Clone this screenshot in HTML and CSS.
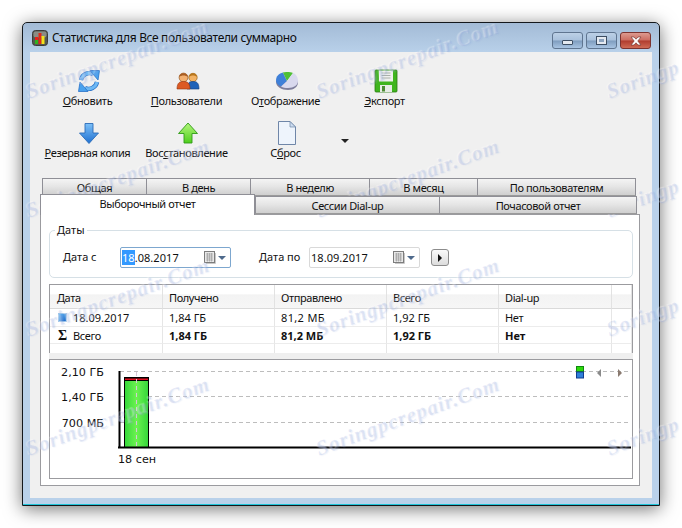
FILE: index.html
```html
<!DOCTYPE html>
<html lang="ru">
<head>
<meta charset="utf-8">
<title>Статистика</title>
<link rel="stylesheet" href="styles.css">
</head>
<body>
<div class="window">
  <header class="titlebar">
    <svg class="app-icon" width="16" height="16" viewBox="0 0 16 16"><rect x="0.5" y="0.5" width="15" height="15" rx="3" fill="#55584f" stroke="#3c3c3c"/><rect x="1.5" y="1.5" width="13" height="6" rx="2" fill="#8a8c85"/><rect x="3" y="7" width="3" height="7" fill="#e8201a"/><rect x="6.5" y="3" width="3" height="11" fill="#e02a1a"/><rect x="9.5" y="6" width="3" height="8" fill="#f2e21c"/><rect x="3" y="10" width="3" height="4" fill="#30b020"/></svg>
    <span class="title">Статистика для Все пользователи суммарно</span>
    <div class="caption">
      <div class="cap cap-min"><i class="glyph-min"></i></div>
      <div class="cap cap-max"><i class="glyph-max"></i></div>
      <div class="cap cap-close"><svg width="14" height="10" viewBox="0 0 14 10"><path d="M2 1 L5 1 L7 3.2 L9 1 L12 1 L8.8 5 L12 9 L9 9 L7 6.8 L5 9 L2 9 L5.2 5 Z" fill="#fff" stroke="#7a3a34" stroke-width="0.7"/></svg></div>
    </div>
  </header>

  <main class="client">
    <div class="toolbar">
      <div class="tool">
        <svg class="icon" width="24" height="24" viewBox="0 0 24 24"><g fill="none"><path d="M4 11 A8.5 8.5 0 0 1 16 5" stroke="#2a72c8" stroke-width="4.4"/><path d="M20 13 A8.5 8.5 0 0 1 8 19" stroke="#2a72c8" stroke-width="4.4"/><path d="M4 11 A8.5 8.5 0 0 1 16 5" stroke="#6db8f4" stroke-width="3"/><path d="M20 13 A8.5 8.5 0 0 1 8 19" stroke="#6db8f4" stroke-width="3"/></g><path d="M13 1.5 L22.5 1.5 L21 11 Z" fill="#4aa2ee" stroke="#2a72c8" stroke-width="0.8"/><path d="M11 22.5 L1.5 22.5 L3 13 Z" fill="#4aa2ee" stroke="#2a72c8" stroke-width="0.8"/></svg>
        <span><u>О</u>бновить</span>
      </div>
      <div class="tool">
        <svg class="icon" width="24" height="24" viewBox="0 0 24 24"><circle cx="17" cy="8.5" r="4.2" fill="#f2b264" stroke="#96651f" stroke-width="0.7"/><path d="M13 8 C13 3 21 3 21 8 C19 6 15 6 13 8 Z" fill="#b8761c"/><path d="M11 20 C11 13 14 12.5 17 12.5 C20 12.5 23 13 23 20 Z" fill="#1f62b8" stroke="#123f80" stroke-width="0.6"/><circle cx="7.5" cy="8.5" r="4.4" fill="#f3b070" stroke="#8f5424" stroke-width="0.7"/><path d="M3.2 8 C3 3 12 3 11.8 8 C10 6 5 6 3.2 8 Z" fill="#a85d22"/><path d="M1 20 C1 13 4.5 12.5 7.5 12.5 C10.5 12.5 14 13 14 20 Z" fill="#dc5a24" stroke="#93350f" stroke-width="0.6"/></svg>
        <span><u>П</u>ользователи</span>
      </div>
      <div class="tool">
        <svg class="icon" width="24" height="24" viewBox="0 0 24 24"><path d="M1 12.5 C1 18 6.5 21 13 21 C19 21 23 17.5 23 13.5 L23 12 L1 12 Z" fill="#7f7f9c"/><path d="M12 12 L8 3.6 C4 4.4 1 7.5 1 11.5 C1 14 3 16.5 6 17.5 Z" fill="#3f80d8"/><path d="M12 12 L8 3.6 C10 3 15 2.8 18 4 Z" fill="#4fc034"/><path d="M12 12 L18 4 C21 5 23 8 23 12 C23 16 19 19 13 19 C10 19 8 18.5 6 17.5 Z" fill="#d9d9ee"/></svg>
        <span>О<u>т</u>ображение</span>
      </div>
      <div class="tool">
        <svg class="icon" width="24" height="24" viewBox="0 0 24 24"><path d="M2 1 H22 A1 1 0 0 1 23 2 V22 A1 1 0 0 1 22 23 H2 A1 1 0 0 1 1 22 V2 A1 1 0 0 1 2 1 Z" fill="#3fb51e" stroke="#2a7c12" stroke-width="0.8"/><rect x="5" y="1.5" width="14" height="11" fill="#eef0ee"/><path d="M7.5 4 H16.5 M7.5 6.5 H16.5 M7.5 9 H16.5" stroke="#aab0aa"/><rect x="6" y="16" width="12" height="7" fill="#e6ece6"/><rect x="8" y="17" width="3" height="5.5" fill="#4c8c34"/></svg>
        <span><u>Э</u>кспорт</span>
      </div>
      <div class="tool">
        <svg class="icon" width="24" height="24" viewBox="0 0 24 24"><defs><linearGradient id="bl" x1="0" y1="0" x2="0" y2="1"><stop offset="0" stop-color="#7cc0f8"/><stop offset="1" stop-color="#1f70d0"/></linearGradient></defs><path d="M8 2.5 H16 V12 H21.5 L12 22.5 L2.5 12 H8 Z" fill="url(#bl)" stroke="#2b6cb8" stroke-width="0.9"/></svg>
        <span><u>Р</u>езервная копия</span>
      </div>
      <div class="tool">
        <svg class="icon" width="24" height="24" viewBox="0 0 24 24"><defs><linearGradient id="gr" x1="0" y1="0" x2="0" y2="1"><stop offset="0" stop-color="#b4f67c"/><stop offset="1" stop-color="#4ece1c"/></linearGradient></defs><path d="M12 2 L21.5 12.5 H16 V22 H8 V12.5 H2.5 Z" fill="url(#gr)" stroke="#2f9a16" stroke-width="0.9"/></svg>
        <span>Вос<u>с</u>тановление</span>
      </div>
      <div class="tool">
        <svg class="icon" width="24" height="24" viewBox="0 0 24 24"><path d="M3.5 0.5 H15 L20.5 6 V23.5 H3.5 Z" fill="#eef4fc" stroke="#6f86a8"/><path d="M15 0.5 V6 H20.5 Z" fill="#cddcf0" stroke="#6f86a8" stroke-width="0.7"/></svg>
        <span>С<u>б</u>рос</span>
      </div>
      <div class="tool-more"><i class="more-arrow"></i></div>
    </div>

    <div class="tabs">
      <div class="tab-row tab-row-back">
        <div class="tab tab-w1">Общая</div>
        <div class="tab tab-w2">В день</div>
        <div class="tab tab-w3">В неделю</div>
        <div class="tab tab-w4">В месяц</div>
        <div class="tab tab-w5">По пользователям</div>
      </div>
      <div class="tab-row tab-row-front">
        <div class="tab tab-active">Выборочный отчет</div>
        <div class="tab tab-w6">Сессии Dial-up</div>
        <div class="tab tab-w7">Почасовой отчет</div>
      </div>
    </div>

    <section class="panel">
      <div class="group">
        <span class="legend">Даты</span>
        <span class="flabel flabel-a">Дата с</span>
        <div class="datefield datefield-focus">
          <span class="datetext"><mark class="sel">18</mark>.08.2017</span>
          <svg class="cal" width="12" height="13" viewBox="0 0 12 13"><rect x="0.5" y="0.5" width="10" height="11" fill="#e8e8e8" stroke="#7d7d7d"/><path d="M2 3 H9 M2 5 H9 M2 7 H9 M2 9 H9 M3.5 2 V10.5 M5.5 2 V10.5 M7.5 2 V10.5" stroke="#a5a5a5" stroke-width="0.8"/><path d="M11.5 2 V12.5 H2" fill="none" stroke="#c8c8c8"/></svg>
          <i class="drop"></i>
        </div>
        <span class="flabel flabel-b">Дата по</span>
        <div class="datefield">
          <span class="datetext">18.09.2017</span>
          <svg class="cal" width="12" height="13" viewBox="0 0 12 13"><rect x="0.5" y="0.5" width="10" height="11" fill="#e8e8e8" stroke="#7d7d7d"/><path d="M2 3 H9 M2 5 H9 M2 7 H9 M2 9 H9 M3.5 2 V10.5 M5.5 2 V10.5 M7.5 2 V10.5" stroke="#a5a5a5" stroke-width="0.8"/><path d="M11.5 2 V12.5 H2" fill="none" stroke="#c8c8c8"/></svg>
          <i class="drop"></i>
        </div>
        <div class="playbtn"><i class="play"></i></div>
      </div>

      <div class="grid">
        <div class="th th-first">Дата</div><div class="th">Получено</div><div class="th">Отправлено</div><div class="th">Всего</div><div class="th">Dial-up</div><div class="th"></div>
        <div class="td td-first"><i class="bullet"></i>18.09.2017</div><div class="td">1,84 ГБ</div><div class="td td-wide">81,2 МБ</div><div class="td">1,92 ГБ</div><div class="td td-word">Нет</div><div class="td"></div>
        <div class="td td-first td-word"><b class="sigma">Σ</b>Всего</div><div class="td td-b">1,84 ГБ</div><div class="td td-b">81,2 МБ</div><div class="td td-b">1,92 ГБ</div><div class="td td-b">Нет</div><div class="td"></div>
        <div class="tf"></div><div class="tf"></div><div class="tf"></div><div class="tf"></div><div class="tf"></div><div class="tf"></div>
      </div>

      <div class="chart">
        <svg class="plot" width="582" height="117" viewBox="0 0 582 117">
          <defs><linearGradient id="bar" x1="0" y1="0" x2="1" y2="0"><stop offset="0" stop-color="#34d83a"/><stop offset="0.5" stop-color="#6cf250"/><stop offset="1" stop-color="#34d63a"/></linearGradient></defs>
          <g class="grid-lines"><path d="M70 11.5 H581 M70 36.5 H581 M70 62.5 H581"/></g>
          <rect x="74.5" y="17.5" width="24" height="70" fill="url(#bar)" stroke="#000"/>
          <rect x="75" y="18" width="23" height="3" fill="#000"/>
          <rect x="75" y="18.5" width="23" height="1.5" fill="#e01020"/>
          <path class="bar-dash" d="M86.5 12 V87"/>
          <path d="M69.5 11 V88 M68 87.5 H581" stroke="#000" stroke-width="2" fill="none"/>
          <text class="ylab" x="54" y="16">2,10 ГБ</text>
          <text class="ylab" x="54" y="41">1,40 ГБ</text>
          <text class="ylab" x="54" y="67">700 МБ</text>
          <text class="xlab" x="68" y="103">18 сен</text>
          <rect x="526.5" y="6.5" width="7" height="5" fill="#2ed80c" stroke="#0f8a10"/>
          <rect x="526.5" y="12" width="7" height="6" fill="#2f7fd8" stroke="#103c90"/>
          <path d="M551 9 L547 13 L551 17 Z" fill="#8a8a8a"/>
          <path d="M568 9 L572 13 L568 17 Z" fill="#8a7a70"/>
        </svg>
      </div>
    </section>
  </main>
  <div class="frame-bottom"></div>
</div>

<div class="watermarks" aria-hidden="true">
  <span>Soringpcrepair.Com</span><span>Soringpcrepair.Com</span><span class="wm-short">Soringp</span>
  <span>Soringpcrepair.Com</span><span>Soringpcrepair.Com</span><span class="wm-short">Soringp</span>
  <span>Soringpcrepair.Com</span><span>Soringpcrepair.Com</span><span class="wm-short">Soringp</span>
  <span>Soringpcrepair.Com</span><span>Soringpcrepair.Com</span><span class="wm-short">Soringp</span>
</div>
</body>
</html>
```
FILE: styles.css
```css
* { box-sizing: border-box; }
html, body { margin: 0; padding: 0; }
body {
  position: relative;
  width: 682px;
  height: 528px;
  overflow: hidden;
  background: #fff;
  padding: 22px 0 0 22px;
  font: 11px/14px "Noto Sans", "Open Sans", sans-serif;
  color: #111;
}
.window {
  width: 638px;
  height: 484px;
  display: flex;
  flex-direction: column;
  border: 1px solid #14181c;
  border-radius: 5px 5px 0 0;
  background: linear-gradient(#a3bbd6, #b9d1ea 30px, #b9d1ea);
  box-shadow: 0 3px 18px rgba(0, 0, 0, .55);
}
.titlebar {
  height: 29px;
  display: flex;
  align-items: center;
  padding: 0 8px 0 9px;
  flex: none;
}
.app-icon { flex: none; }
.title {
  margin-left: 4px;
  font-size: 12px;
  letter-spacing: -.35px;
  color: #0c0c0c;
  white-space: nowrap;
}
.caption { margin-left: auto; display: flex; gap: 3px; align-self: flex-start; margin-top: 9px; }
.cap {
  width: 31px;
  height: 17px;
  border: 1px solid #5f7590;
  border-radius: 3px;
  display: flex;
  align-items: center;
  justify-content: center;
  background: linear-gradient(#bcd0e6 0, #a9c1dc 48%, #7e9cbe 52%, #a8c4e2 100%);
}
.cap-close {
  border-color: #7c3330;
  background: linear-gradient(#dd9a90 0, #cc6c60 48%, #b03c2e 52%, #cf6a55 100%);
}
.glyph-min { width: 11px; height: 5px; background: #e4e9f0; border: 1px solid #3d4e63; border-radius: 1px; margin-top: 3px; }
.glyph-max { width: 11px; height: 9px; background: #e4e9f0; border: 1px solid #3d4e63; display: flex; align-items: center; justify-content: center; }
.glyph-max::after { content: ""; width: 5px; height: 3px; background: #8ba3bf; border: 0; }
.client {
  flex: none;
  height: 446px;
  margin: 0 7px;
  background: #f0f0f0;
  padding: 14px 0 0 9px;
}
.frame-bottom {
  flex: 1;
  border-bottom: 1px solid #1fc4d8;
}
.toolbar {
  display: grid;
  grid-template-columns: repeat(4, 99px);
  grid-auto-rows: 52px;
  margin-bottom: 8px;
  letter-spacing: -.35px;
}
.tool {
  display: flex;
  flex-direction: column;
  align-items: center;
  white-space: nowrap;
  padding-top: 3px;
}
.tool span { margin-right: 2px; }
.tool u { text-decoration-thickness: 1px; text-underline-offset: 1px; }
.icon { display: block; margin-bottom: 1px; }
.tool-more { padding: 21px 0 0 6px; margin-left: -1px; }
.more-arrow {
  display: block;
  width: 0;
  height: 0;
  border: 4px solid transparent;
  border-top: 4px solid #222;
  border-bottom: 0;
}
.tabs { margin-left: 1px; letter-spacing: -.38px; }
.tab-row { display: flex; }
.tab-row-back { padding-left: 2px; height: 18px; }
.tab-row-front { height: 18px; position: relative; z-index: 1; }
.tab {
  height: 18px;
  border: 1px solid #8f8f96;
  border-bottom-color: #9a9a9a;
  background: linear-gradient(#f4f4f4, #e6e6e6 45%, #cfcfcf);
  display: flex;
  align-items: center;
  justify-content: center;
  white-space: nowrap;
  padding-top: 1px;
}
.tab + .tab { margin-left: -1px; }
.tab-w1 { width: 105px; }
.tab-w2 { width: 105px; }
.tab-w3 { width: 120px; }
.tab-w4 { width: 109px; }
.tab-w5 { width: 159px; }
.tab-w6 { width: 185px; margin-left: 0 !important; }
.tab-w7 { width: 198px; }
.tab-active {
  width: 215px;
  height: 21px;
  margin-top: -2px;
  background: #fff;
  border-bottom: 0;
  align-items: flex-start;
  padding-top: 2px;
  position: relative;
  z-index: 2;
}
.panel {
  margin-left: 1px;
  width: 600px;
  height: 272px;
  border: 1px solid #9b9b9f;
  background: #fff;
  padding: 15px 6px 0 8px;
}
.group {
  position: relative;
  height: 48px;
  border: 1px solid #d6e0e6;
  border-radius: 5px;
  display: flex;
  align-items: flex-start;
  padding: 16px 0 0 13px;
}
.legend {
  position: absolute;
  left: 5px;
  top: -8px;
  background: #fff;
  padding: 0 2px;
}
.flabel { line-height: 20px; }
.flabel-a { width: 57px; }
.flabel-b { width: 50px; margin-left: 28px; }
.datefield {
  width: 111px;
  height: 21px;
  border: 1px solid #d9d9d9;
  border-radius: 2px;
  display: flex;
  align-items: center;
  padding-left: 1px;
  background: #fff;
}
.datefield-focus { border-color: #7da7cf; }
.datetext { width: 82px; letter-spacing: .05px; }
.sel { background: #3399ff; color: #fff; }
.cal { flex: none; }
.drop {
  margin-left: 2px;
  border: 4px solid transparent;
  border-top: 4px solid #4f6a8c;
  border-bottom: 0;
  width: 0;
  height: 0;
}
.playbtn {
  width: 18px;
  height: 17px;
  margin: 2px 0 0 11px;
  border: 1px solid #8c8c8c;
  border-radius: 3px;
  background: linear-gradient(#fafafa, #dcdcdc);
  display: flex;
  align-items: center;
  justify-content: center;
}
.play { border: 4px solid transparent; border-left: 4px solid #111; border-right: 0; width: 0; height: 0; }
.grid {
  margin-top: 6px;
  height: 70px;
  border: 1px solid #9b9b9f;
  display: grid;
  grid-template-columns: 113px 112px 112px 112px 113px 20px;
  grid-template-rows: 24px 18px 17px 9px;
  white-space: nowrap;
}
.th {
  border-right: 1px solid #e2e2e2;
  border-bottom: 1px solid #dadada;
  background: linear-gradient(#fff 40%, #f3f3f3 42%, #f6f6f6);
  padding: 6px 0 0 6px;
  letter-spacing: -.4px;
}
.th-first { padding-left: 7px; }
.td {
  border-right: 1px solid #e6e6e6;
  border-bottom: 1px solid #ececec;
  padding: 2px 0 0 6px;
}
.td-first { display: flex; padding-left: 8px; }
.td-b { font-weight: 700; }
.td-wide { letter-spacing: .35px; }
.td-word { letter-spacing: -.35px; }
.tf { border-right: 1px solid #e6e6e6; }
.bullet {
  width: 9px;
  height: 9px;
  margin: 2px 6px 0 0;
  background: linear-gradient(135deg, #66b6f4, #1266c8);
  border: 1px solid #9cc4e8;
}
.sigma { font: 700 14px/14px "Liberation Serif", serif; margin-right: 5px; width: 10px; }
.chart {
  margin-top: 5px;
  height: 120px;
  border: 1px solid #9b9b9f;
  box-shadow: 0 -6px 0 0 #efefef;
  background: #fff;
}
.plot { display: block; }
.grid-lines path { stroke: #bdbdbd; stroke-dasharray: 4 3; fill: none; }
.bar-dash { stroke: #d7c8d7; stroke-dasharray: 4 3; fill: none; }
.ylab, .xlab { font: 11.2px "DejaVu Sans", sans-serif; fill: #111; }
.ylab { text-anchor: end; }
.watermarks {
  position: absolute;
  left: 0;
  top: 0;
  width: 682px;
  height: 476px;
  overflow: hidden;
  display: grid;
  grid-template-columns: 230px 350px 102px;
  grid-auto-rows: 119px;
  pointer-events: none;
}
.watermarks span {
  width: 188px;
  justify-self: center;
  align-self: center;
  transform: rotate(-20deg);
  white-space: nowrap;
  font: italic 700 21px/24px "Liberation Serif", serif;
  letter-spacing: 1px;
  color: rgba(135, 155, 215, .19);
  text-shadow: 1px 1px 1px rgba(150, 170, 220, .16), -1px -1px 1px rgba(255, 255, 255, .3);
}
.watermarks .wm-short {
  width: 70px;
  justify-self: start;
  margin: 40px 0 0 25px;
}
```
